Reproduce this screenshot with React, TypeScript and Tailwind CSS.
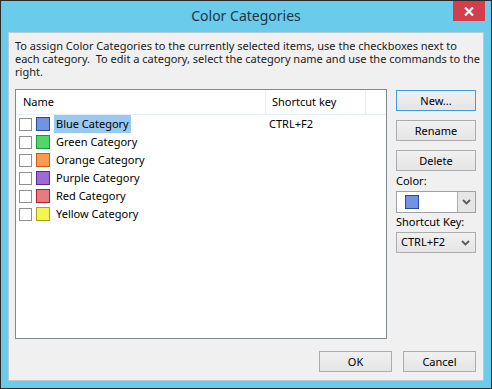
const categories = [
  { name: "Blue Category", fill: "#7393e2", edge: "#2b4a95", key: "CTRL+F2", selected: true },
  { name: "Green Category", fill: "#50d66c", edge: "#1c9636", key: "", selected: false },
  { name: "Orange Category", fill: "#fb9a50", edge: "#c65d12", key: "", selected: false },
  { name: "Purple Category", fill: "#9e6ad4", edge: "#5b2a92", key: "", selected: false },
  { name: "Red Category", fill: "#e67c81", edge: "#b41d2b", key: "", selected: false },
  { name: "Yellow Category", fill: "#f5f552", edge: "#a8a31f", key: "", selected: false },
];

function Chevron() {
  return (
    <svg width="9" height="6" viewBox="0 0 9 6">
      <path d="M1 1 L4.5 4.5 L8 1" fill="none" stroke="#5a5a5a" strokeWidth="1.8" />
    </svg>
  );
}

function WinButton({ label, focused = false, className = "" }: { label: string; focused?: boolean; className?: string }) {
  return (
    <button
      className={`h-[21px] border bg-gradient-to-b from-[#f0f0f0] to-[#e5e5e5] text-[11px] leading-none text-black ${
        focused ? "border-[#3c9fe6]" : "border-[#acacac]"
      } ${className}`}
    >
      {label}
    </button>
  );
}

export default function App() {
  return (
    <div className="w-[492px] h-[389px] border border-[#2a2a2a] bg-[#6acbea] flex flex-col font-['Segoe_UI','Noto_Sans',sans-serif] text-[11px] text-black select-none">
      {/* Title bar */}
      <div className="relative h-[31px] flex items-center justify-center">
        <span className="text-[14px] text-[#1d3646] leading-none -mt-[2px]">Color Categories</span>
        <div className="absolute right-[6px] top-0 w-[32px] h-[20px] bg-[#d43d4b] flex items-center justify-center">
          <svg width="10" height="9" viewBox="0 0 10 9">
            <path d="M1 0.5 L9 8.5 M9 0.5 L1 8.5" stroke="#fff" strokeWidth="2.2" />
          </svg>
        </div>
      </div>

      {/* Client area */}
      <div className="mx-[7px] h-[349px] bg-[#f0f0f0] border border-[#b9c9d2] pl-[6px] pr-[7px] pt-[6px] flex flex-col">
        <div className="leading-[13px] whitespace-nowrap text-[#1a1a1a]">
          <div>To assign Color Categories to the currently selected items, use the checkboxes next to</div>
          <div>each category.&nbsp; To edit a category, select the category name and use the commands to the</div>
          <div>right.</div>
        </div>

        <div className="flex gap-[9px] mt-[11px]">
          {/* List view */}
          <div className="w-[372px] h-[250px] border border-[#828790] bg-white">
            <div className="flex h-[25px] border-b border-[#e5eef8]">
              <div className="w-[250px] border-r border-[#e5eef8] pl-[7px] flex items-center">Name</div>
              <div className="w-[100px] border-r border-[#e5eef8] pl-[6px] flex items-center">Shortcut key</div>
            </div>
            {categories.map((c) => (
              <div key={c.name} className="flex h-[18px] items-center">
                <div className="w-[251px] flex items-center pl-[3px]">
                  <div className="w-[13px] h-[13px] border border-[#8f8f8f] bg-white" />
                  <div
                    className="w-[14px] h-[14px] ml-[4px] border"
                    style={{ backgroundColor: c.fill, borderColor: c.edge }}
                  />
                  <div
                    className={`ml-[4px] h-[18px] px-[2px] flex items-center ${
                      c.selected ? "bg-[#99c9ef]" : ""
                    }`}
                  >
                    {c.name}
                  </div>
                </div>
                <div className="pl-[2px]">{c.key}</div>
              </div>
            ))}
          </div>

          {/* Right command column */}
          <div className="w-[80px] flex flex-col pt-[1px]">
            <WinButton label="New..." focused className="w-[80px]" />
            <WinButton label="Rename" className="w-[80px] mt-[9px]" />
            <WinButton label="Delete" className="w-[80px] mt-[9px]" />
            <div className="mt-[2px] leading-[16px]">Color:</div>
            <div className="mt-[2px] h-[22px] border border-[#a0a0a0] bg-white flex">
              <div className="flex-1 flex items-center pl-[8px]">
                <div className="w-[14px] h-[14px] bg-[#7393e2] border border-[#2b4a95]" />
              </div>
              <div className="w-[18px] border-l border-[#acacac] bg-[#e6e6e6] flex items-center justify-center">
                <Chevron />
              </div>
            </div>
            <div className="mt-[1px] leading-[16px]">Shortcut Key:</div>
            <div className="mt-[2px] h-[21px] border border-[#acacac] bg-gradient-to-b from-[#f0f0f0] to-[#e5e5e5] flex items-center justify-between pl-[4px] pr-[5px]">
              <span>CTRL+F2</span>
              <Chevron />
            </div>
          </div>
        </div>

        <div className="flex justify-end gap-[11px] mt-[12px]">
          <WinButton label="OK" className="w-[73px]" />
          <WinButton label="Cancel" className="w-[73px]" />
        </div>
      </div>
      <div className="h-[7px]" />
    </div>
  );
}
